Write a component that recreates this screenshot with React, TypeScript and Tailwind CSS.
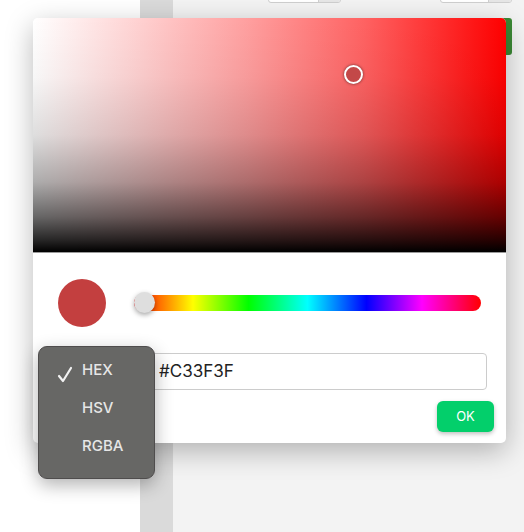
import React from "react";

export default function App() {
  return (
    <div className="relative w-[524px] h-[532px] overflow-hidden flex bg-white" style={{ fontFamily: "Inter, 'Liberation Sans', sans-serif" }}>
      {/* background page */}
      <div className="w-[140px] h-full bg-white" />
      <div className="w-[33px] h-full bg-[#dadada]" />
      <div className="flex-1 h-full bg-[#f3f3f3] flex flex-col">
        <div className="relative h-[18px] w-full">
          <div className="absolute left-[95px] top-[-14px] w-[73px] h-[17px] flex rounded-[3px] border border-[#cfcfcf] bg-white overflow-hidden">
            <div className="flex-1" />
            <div className="w-[22px] bg-[#e6e6e6] border-l border-[#cfcfcf]" />
          </div>
          <div className="absolute left-[267px] top-[-14px] w-[72px] h-[17px] flex rounded-[3px] border border-[#cfcfcf] bg-white overflow-hidden">
            <div className="flex-1" />
            <div className="w-[23px] bg-[#e6e6e6] border-l border-[#cfcfcf]" />
          </div>
        </div>
        <div className="flex justify-end pr-[12px]">
          <div className="w-[24px] h-[37px] rounded-[3px] bg-[#3b8a35]" />
        </div>
      </div>

      {/* color picker popover */}
      <div className="absolute left-[33px] top-[18px] w-[473px] h-[425px] bg-white rounded-[5px] overflow-hidden shadow-[0_8px_28px_rgba(0,0,0,0.28)] flex flex-col">
        <div
          className="relative h-[235px] w-full shrink-0 border-b border-[#9a9a9a]"
          style={{
            background:
              "linear-gradient(to top, rgba(0,0,0,1) 0%, rgba(0,0,0,0.85) 5%, rgba(0,0,0,0.6) 15%, rgba(0,0,0,0.32) 30%, rgba(0,0,0,0.13) 50%, rgba(0,0,0,0.03) 75%, rgba(0,0,0,0) 100%), linear-gradient(to right, #ffffff 0%, #ffd6d6 20%, #ffa0a0 45%, #ff6262 70%, #ff0000 100%)",
          }}
        >
          <div className="absolute left-[311px] top-[47px] w-[19px] h-[19px] rounded-full border-2 border-white bg-[#c34848] shadow-[0_0_3px_rgba(0,0,0,0.6)]" />
        </div>
        <div className="flex items-center mt-[26px] pl-[25px] pr-[25px] h-[48px]">
          <div className="w-[48px] h-[48px] rounded-full bg-[#c33f3f]" />
          <div
            className="relative ml-[28px] flex-1 h-[16px] rounded-full"
            style={{
              background:
                "linear-gradient(to right, #ff0000 0%, #ffff00 17%, #00ff00 33%, #00ffff 50%, #0000ff 67%, #ff00ff 83%, #ff0000 100%)",
            }}
          >
            <div className="absolute left-0 top-[-3px] w-[21px] h-[21px] rounded-full bg-[#dedede] shadow-[0_2px_5px_rgba(0,0,0,0.35)]" />
          </div>
        </div>
        <div className="flex justify-end mt-[26px] pr-[19px]">
          <div className="w-[337px] h-[37px] rounded-[4px] border border-[#cccccc] flex items-center pl-[8px] text-[17px] text-[#222]">
            #C33F3F
          </div>
        </div>
        <div className="flex justify-end mt-[11px] pr-[12px]">
          <div className="w-[57px] h-[31px] rounded-[6px] bg-[#03cf6b] shadow-[0_2px_4px_rgba(0,0,0,0.25)] flex items-center justify-center text-white text-[13px]">
            OK
          </div>
        </div>
      </div>

      {/* format dropdown */}
      <div className="absolute left-[38px] top-[346px] w-[117px] h-[133px] rounded-[9px] bg-[#676765] border border-[#4f4d4d] shadow-[0_6px_18px_rgba(0,0,0,0.3)] flex flex-col pt-[10px] text-[#e6e6e6] text-[15px] font-medium">
        <div className="flex items-center h-[26px]">
          <div className="w-[43px] flex justify-end pr-[9px] pt-[8px]">
            <svg width="16" height="17" viewBox="0 0 16 17">
              <path d="M2 10 L6 15 L14 2" fill="none" stroke="#f2f2f2" strokeWidth="2.2" strokeLinecap="round" strokeLinejoin="round" />
            </svg>
          </div>
          <span>HEX</span>
        </div>
        <div className="flex items-center h-[26px] mt-[12px] pl-[43px]">HSV</div>
        <div className="flex items-center h-[26px] mt-[12px] pl-[43px]">RGBA</div>
      </div>
    </div>
  );
}
